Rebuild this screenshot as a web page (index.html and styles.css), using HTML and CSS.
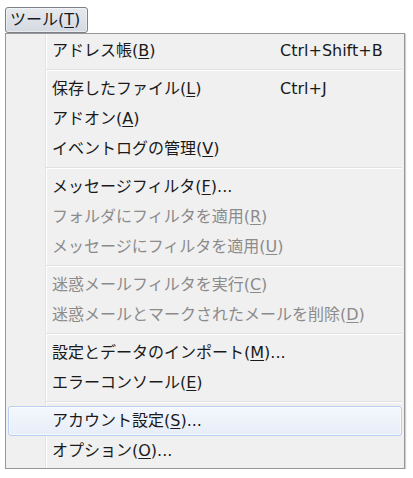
FILE: index.html
```html
<!DOCTYPE html>
<html lang="ja">
<head>
    <meta charset="UTF-8">
    <meta name="viewport" content="width=device-width, initial-scale=1.0">
    <title>ツールメニュー</title>
    <link rel="stylesheet" href="styles.css">
</head>
<body>
    <div class="menubar">
        <span class="menubar-item open">ツール(<u>T</u>)</span>
    </div>
    <div class="menu">
        <div class="item"><span class="label">アドレス帳(<u>B</u>)</span><span class="key">Ctrl+Shift+B</span></div>
        <div class="sep"></div>
        <div class="item"><span class="label">保存したファイル(<u>L</u>)</span><span class="key">Ctrl+J</span></div>
        <div class="item"><span class="label">アドオン(<u>A</u>)</span></div>
        <div class="item"><span class="label">イベントログの管理(<u>V</u>)</span></div>
        <div class="sep"></div>
        <div class="item"><span class="label">メッセージフィルタ(<u>F</u>)...</span></div>
        <div class="item disabled"><span class="label">フォルダにフィルタを適用(<u>R</u>)</span></div>
        <div class="item disabled"><span class="label">メッセージにフィルタを適用(<u>U</u>)</span></div>
        <div class="sep"></div>
        <div class="item disabled"><span class="label">迷惑メールフィルタを実行(<u>C</u>)</span></div>
        <div class="item disabled"><span class="label">迷惑メールとマークされたメールを削除(<u>D</u>)</span></div>
        <div class="sep"></div>
        <div class="item"><span class="label">設定とデータのインポート(<u>M</u>)...</span></div>
        <div class="item"><span class="label">エラーコンソール(<u>E</u>)</span></div>
        <div class="sep"></div>
        <div class="item hover"><span class="label">アカウント設定(<u>S</u>)...</span></div>
        <div class="item"><span class="label">オプション(<u>O</u>)...</span></div>
    </div>
</body>
</html>
```

FILE: styles.css
```css
body {
    margin: 0;
    background-color: #fff;
    color: #1a1a1a;
    font-family: "DejaVu Sans", "Noto Sans CJK JP", sans-serif;
    font-size: 16px;
}

u {
    text-underline-offset: 2px;
}

.menubar {
    padding: 7px 0 0 5px;
    height: 26px;
}

.menubar-item {
    display: inline-block;
    box-sizing: border-box;
    height: 26px;
    line-height: 24px;
    padding: 0 7px 0 4px;
    border: 1px solid #7c8088;
    border-radius: 3px;
    background: linear-gradient(#e6e9ee, #d4d9e1);
    box-shadow: inset 0 0 0 1px rgba(255, 255, 255, 0.45);
}

.menu {
    margin-left: 5px;
    width: 394px;
    padding: 2px;
    border: 1px solid #979797;
    background:
        linear-gradient(to right, transparent 39px, #e2e3e3 39px, #e2e3e3 40px, #fff 40px, #fff 41px, transparent 41px),
        #f0f0f0;
    box-shadow: 1px 1px 1px rgba(0, 0, 0, 0.18);
}

.item {
    display: flex;
    box-sizing: border-box;
    height: 30px;
    line-height: 28px;
    padding-left: 43px;
    border: 1px solid transparent;
    border-radius: 3px;
}

.item .label {
    flex: 0 0 228px;
    white-space: nowrap;
}

.item .key {
    white-space: nowrap;
}

.item.disabled {
    color: #8b8b8b;
}

.item.hover {
    border-color: #b7cff0;
    background: linear-gradient(#f4f7fc, #e7eef9);
    box-shadow: inset 0 0 0 1px rgba(255, 255, 255, 0.6);
}

.sep {
    margin: 3px 0 3px 38px;
    height: 1px;
    background-color: #e0e0e0;
    border-bottom: 1px solid #fff;
}
```
